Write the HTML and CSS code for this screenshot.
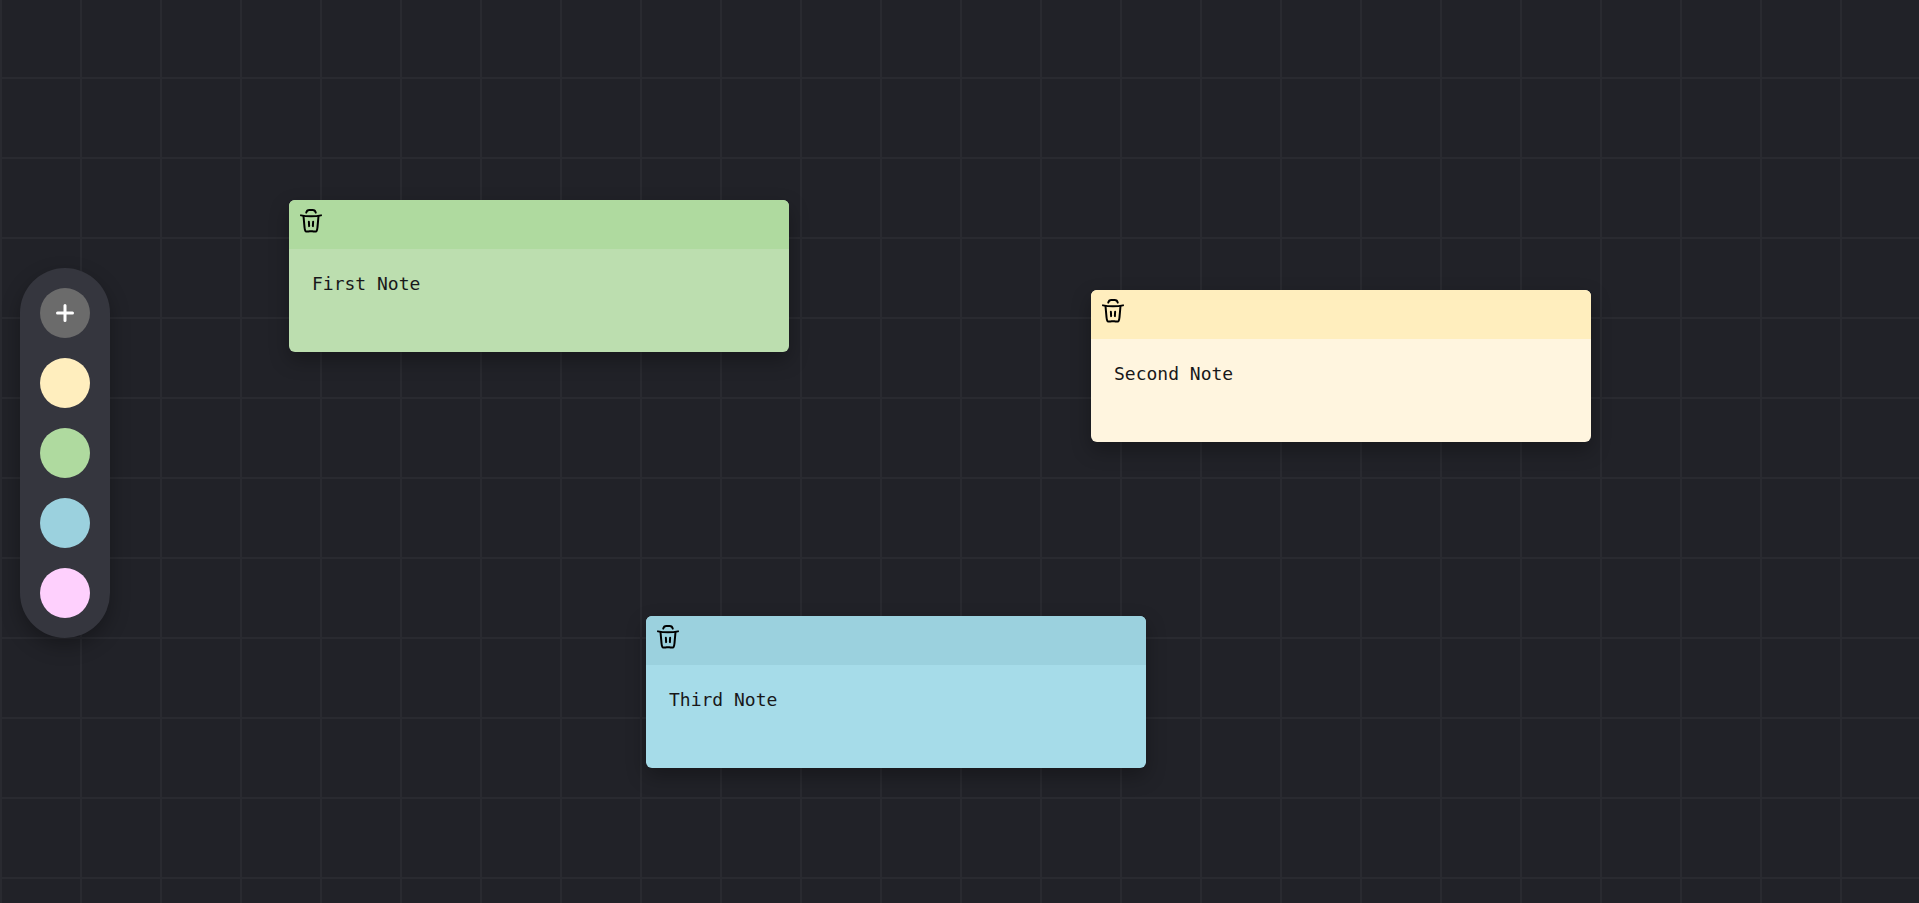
FILE: index.html
```html
<!DOCTYPE html>
<html lang="en">
<head>
<meta charset="utf-8">
<meta name="viewport" content="width=device-width, initial-scale=1">
<title>Sticky Notes</title>
<link rel="stylesheet" href="styles.css">
</head>
<body>
<svg class="symbols" aria-hidden="true">
  <symbol id="trash" viewBox="0 0 24 24">
    <g fill="none" stroke="currentColor" stroke-width="1.6" stroke-linecap="round">
      <path d="m6 8 .8 8.900c.15 1.900.2 2.700.8 3.200.7.500 1.700.400 3.400.1.700-.1 1.300-.1 2 0 1.700.3 2.700.4 3.400-.1.600-.5.650-1.300.8-3.200L18 8"/>
      <path d="m10.300 12.600.2 3.500M13.700 12.600l-.2 3.500"/>
      <path d="M8.200 5.300c.3-1.300 1.200-2.100 2.500-2.100h2.600c1.300 0 2.200.8 2.500 2.100"/>
      <path d="M4 7.500c2.500.5 5.200.7 8 .7s5.500-.2 8-.7"/>
    </g>
  </symbol>
</svg>
<main class="board">
  <nav class="controls" aria-label="Note tools">
    <button class="swatch swatch-add" type="button" aria-label="Add note">
      <svg class="plus" viewBox="0 0 18 18" aria-hidden="true"><path d="M9 1.500v15M1.500 9h15"/></svg>
    </button>
    <button class="swatch swatch-yellow" type="button" aria-label="Yellow"></button>
    <button class="swatch swatch-green" type="button" aria-label="Green"></button>
    <button class="swatch swatch-blue" type="button" aria-label="Blue"></button>
    <button class="swatch swatch-pink" type="button" aria-label="Pink"></button>
  </nav>
  <article class="note note-green note-first">
    <header class="note-header"><button class="delete" type="button" aria-label="Delete first note"><svg class="icon" aria-hidden="true"><use href="#trash"/></svg></button></header>
    <textarea class="note-text" aria-label="First note text" spellcheck="false">First Note</textarea>
  </article>
  <article class="note note-yellow note-second">
    <header class="note-header"><button class="delete" type="button" aria-label="Delete second note"><svg class="icon" aria-hidden="true"><use href="#trash"/></svg></button></header>
    <textarea class="note-text" aria-label="Second note text" spellcheck="false">Second Note</textarea>
  </article>
  <article class="note note-blue note-third">
    <header class="note-header"><button class="delete" type="button" aria-label="Delete third note"><svg class="icon" aria-hidden="true"><use href="#trash"/></svg></button></header>
    <textarea class="note-text" aria-label="Third note text" spellcheck="false">Third Note</textarea>
  </article>
</main>
</body>
</html>
```
FILE: styles.css
```css
* { box-sizing: border-box; }

body { margin: 0; background: #212228; }

.symbols { position: absolute; width: 0; height: 0; }

.board {
  position: relative;
  min-height: 100vh;
  overflow: hidden;
  background-color: #212228;
  background-image:
    linear-gradient(#292a30 2px, transparent 2px),
    linear-gradient(90deg, #292a30 2px, transparent 2px);
  background-size: 80px 80px;
  background-position: 0 -3px;
}

.controls {
  position: absolute;
  left: 20px;
  top: 268px;
  display: flex;
  flex-direction: column;
  gap: 20px;
  padding: 20px;
  border-radius: 45px;
  background: #35363e;
  box-shadow: 0 8px 20px rgba(0, 0, 0, 0.3);
}

.swatch {
  display: grid;
  place-items: center;
  width: 50px;
  height: 50px;
  padding: 0;
  border: 0;
  border-radius: 50%;
  cursor: pointer;
}

.swatch-add { background: #6b6b6b; }
.swatch-yellow { background: #ffeebe; }
.swatch-green { background: #afda9f; }
.swatch-blue { background: #9bd1de; }
.swatch-pink { background: #fed0fd; }

.plus {
  width: 18px;
  height: 18px;
  fill: none;
  stroke: #fff;
  stroke-width: 3;
  stroke-linecap: round;
}

.note {
  position: absolute;
  width: 500px;
  border-radius: 6px;
  overflow: hidden;
  box-shadow: 0 8px 20px rgba(0, 0, 0, 0.3);
}

.note-first { left: 289px; top: 200px; }
.note-second { left: 1091px; top: 290px; }
.note-third { left: 646px; top: 616px; }

.note-header { display: flex; padding: 6px 7px 13px; }

.delete {
  display: block;
  padding: 0;
  border: 0;
  background: none;
  color: #000;
  cursor: pointer;
}

.icon { display: block; width: 30px; height: 30px; }

.note-text {
  display: block;
  width: 100%;
  height: 103px;
  padding: 24px 23px;
  border: 0;
  outline: 0;
  resize: none;
  background: none;
  color: #18181a;
  font: 18px/22px "DejaVu Sans Mono", monospace;
}

.note-green { background: #bcdeaf; }
.note-green .note-header { background: #afda9f; }
.note-yellow { background: #fff5df; }
.note-yellow .note-header { background: #ffeebe; }
.note-blue { background: #a6dce9; }
.note-blue .note-header { background: #9bd1de; }
```
